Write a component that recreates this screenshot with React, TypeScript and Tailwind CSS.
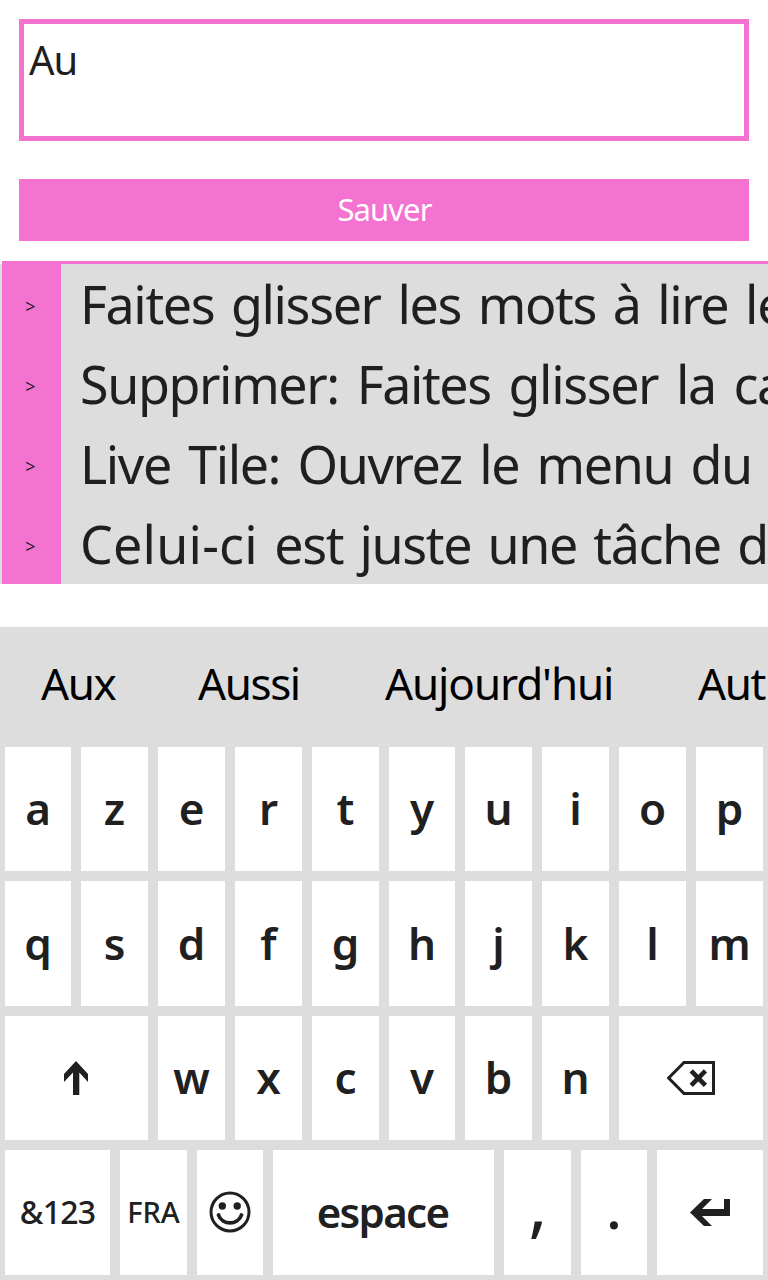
import type { ReactNode } from "react";

const tasks = [
  { lead: "Faites", rest: " glisser les mots à lire le", leadCls: "", cls: "[word-spacing:4.7px]" },
  { lead: "Supprimer:", rest: " Faites glisser la ca", leadCls: "", cls: "[word-spacing:5.6px]" },
  { lead: "Live Tile:", rest: " Ouvrez le menu du", leadCls: "", cls: "[word-spacing:5.2px]" },
  { lead: "Celui-ci", rest: " est juste une tâche d", leadCls: "tracking-[0.2px]", cls: "[word-spacing:4.3px]" },
];

function Key({ children, className = "" }: { children: ReactNode; className?: string }) {
  return (
    <button
      type="button"
      className={`flex items-center justify-center bg-white pb-[2px] text-[44px] leading-none font-semibold text-[#202020] ${className}`}
    >
      {children}
    </button>
  );
}

export default function App() {
  return (
    <div className="flex h-[1280px] w-[768px] flex-col overflow-hidden bg-white font-['Noto_Sans','Open_Sans',sans-serif] text-[#1f1f1f]">
      <div className="mx-[19px] mt-[19px] h-[122px] shrink-0 border-[5px] border-[#f472d0] bg-white pt-[9px] pl-[5px] text-[40px] leading-[54px] tracking-[-1px]">
        Au
      </div>
      <button
        type="button"
        className="mx-[19px] mt-[38px] flex h-[62px] shrink-0 items-center justify-center bg-[#f472d0] pb-[1px] pl-[1px] text-[31px] leading-none tracking-[-0.9px] text-white"
      >
        Sauver
      </button>
      <div className="mt-[20px] ml-[2px] h-[3px] shrink-0 bg-[#f472d0]" />
      <ul className="shrink-0 bg-[#dddddd] pl-[2px]">
        {tasks.map((t) => (
          <li key={t.lead} className="flex h-[80px] overflow-hidden">
            <span className="flex w-[59px] shrink-0 items-center justify-center bg-[#f472d0] pt-[4px] pr-[2px] text-[18px] leading-none">
              &gt;
            </span>
            <span className={`pl-[19px] text-[52px] leading-[79px] tracking-[-1.4px] whitespace-nowrap ${t.cls}`}>
              <span className={t.leadCls}>{t.lead}</span>
              {t.rest}
            </span>
          </li>
        ))}
      </ul>
      <section className="mt-[43px] flex grow flex-col bg-[#dddddd]">
        <div className="flex h-[120px] shrink-0 overflow-hidden pl-[41px] text-[44px] leading-[113px] tracking-[-1.4px] whitespace-nowrap text-black">
          <span className="w-[157px] shrink-0">Aux</span>
          <span className="w-[187px] shrink-0">Aussi</span>
          <span className="w-[313px] shrink-0 tracking-[-1.1px]">Aujourd'hui</span>
          <span className="shrink-0">Aut</span>
        </div>
        <div className="grid grid-cols-[66px_67px_67px_67px_67px_66px_67px_67px_67px_67px] grid-rows-[124px_125px_124px] gap-[10px] px-[5px]">
          {[..."azertyuiopqsdfghjklm"].map((c) => (
            <Key key={c}>{c}</Key>
          ))}
          <Key className="col-span-2">
            <svg width="24" height="34" viewBox="0 0 24 34" className="mt-[2px] mr-[2px]" fill="#202020">
              <path d="M12 0 24 13V21L15.300 11.500V34H9V11.500L0 21V13Z" />
            </svg>
          </Key>
          {[..."wxcvbn"].map((c) => (
            <Key key={c}>{c}</Key>
          ))}
          <Key className="col-span-2">
            <svg width="48" height="34" viewBox="0 0 48 34" className="mt-[2px]" fill="none" stroke="#202020">
              <path d="M17 1.500H46.500V32.500H17L1.700 17Z" strokeWidth="3" />
              <path d="M24.200 9.900 38.400 24.400M38.400 9.900 24.200 24.400" strokeWidth="4.600" />
            </svg>
          </Key>
        </div>
        <div className="mt-[10px] flex h-[125px] shrink-0 gap-[10px] px-[5px]">
          <Key className="w-[105px] text-[32px]! font-medium! tracking-[-0.8px]">&amp;123</Key>
          <Key className="w-[67px] text-[29px]! font-medium!">FRA</Key>
          <Key className="w-[66px]">
            <svg width="42" height="42" viewBox="0 0 42 42" fill="none" stroke="#202020">
              <circle cx="21" cy="21" r="19" strokeWidth="3" />
              <circle cx="13.300" cy="15" r="3.700" fill="#202020" stroke="none" />
              <circle cx="28.200" cy="15" r="3.700" fill="#202020" stroke="none" />
              <path d="M9.500 24C13 34.500 29 34.500 32.500 24" strokeWidth="3.800" strokeLinecap="round" />
            </svg>
          </Key>
          <Key className="w-[221px] pr-[2px]! text-[42px]! tracking-[-1.7px]">espace</Key>
          <Key className="w-[67px] pb-[22px]! pl-[1px]! text-[72px]! font-normal!">,</Key>
          <Key className="w-[66px] pb-[8px]! text-[52px]!">.</Key>
          <Key className="w-[106px]">
            <svg width="40" height="27" viewBox="0 0 40 27" className="mt-[2px]" fill="#202020">
              <path d="M14 0H22L12 10H34V0H40V17H12L22 27H14L0 13.500Z" />
            </svg>
          </Key>
        </div>
      </section>
    </div>
  );
}
